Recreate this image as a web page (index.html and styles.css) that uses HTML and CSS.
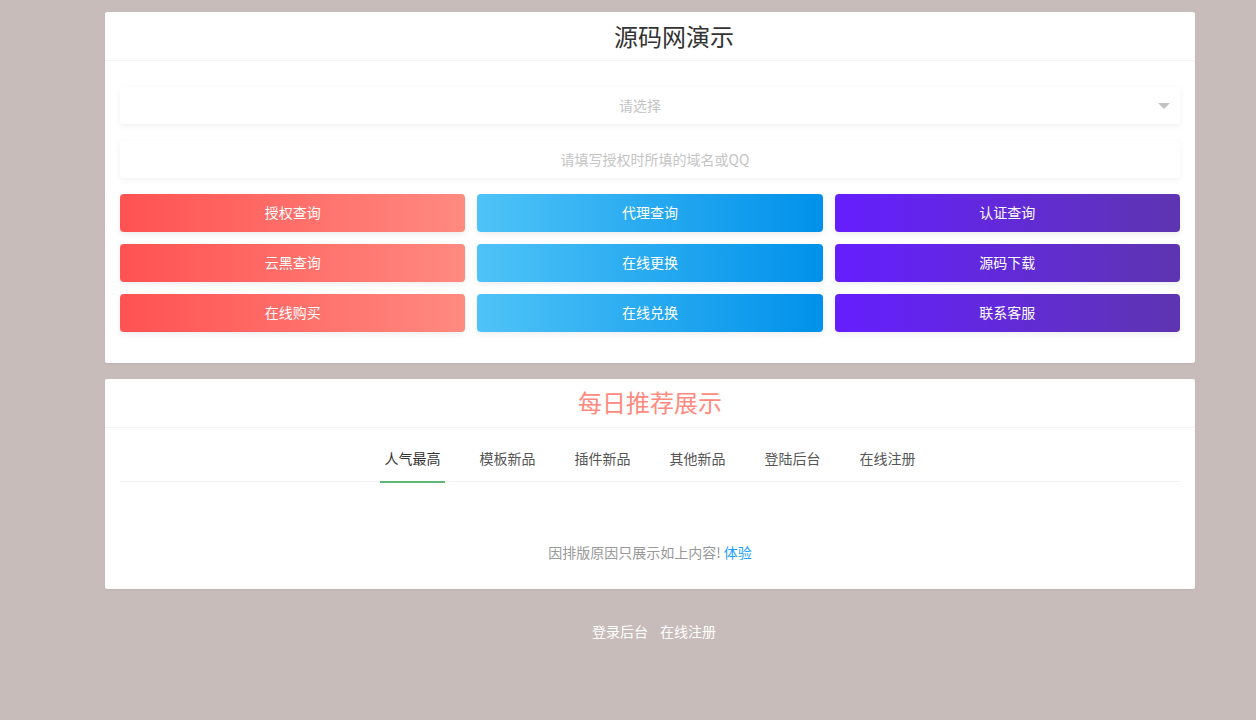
FILE: index.html
```html
<!DOCTYPE html>
<html lang="zh-CN">
<head>
<meta charset="utf-8">
<title>源码网演示</title>
<link rel="stylesheet" href="styles.css">
</head>
<body>
<main class="wrap">
  <section class="card">
    <header class="card-head"><h1 class="title main-title">源码网演示</h1></header>
    <div class="card-body">
      <div class="field select">
        <span class="placeholder">请选择</span>
        <span class="caret"></span>
      </div>
      <div class="field text">
        <span class="placeholder">请填写授权时所填的域名或QQ</span>
      </div>
      <div class="btn-grid">
        <a class="btn red">授权查询</a>
        <a class="btn blue">代理查询</a>
        <a class="btn purple">认证查询</a>
        <a class="btn red">云黑查询</a>
        <a class="btn blue">在线更换</a>
        <a class="btn purple">源码下载</a>
        <a class="btn red">在线购买</a>
        <a class="btn blue">在线兑换</a>
        <a class="btn purple">联系客服</a>
      </div>
    </div>
  </section>

  <section class="card">
    <header class="card-head"><h2 class="title pink">每日推荐展示</h2></header>
    <div class="card-body tabs-body">
      <ul class="tabs">
        <li class="tab active">人气最高</li>
        <li class="tab">模板新品</li>
        <li class="tab">插件新品</li>
        <li class="tab">其他新品</li>
        <li class="tab">登陆后台</li>
        <li class="tab">在线注册</li>
      </ul>
      <p class="note">因排版原因只展示如上内容! <a class="link">体验</a></p>
    </div>
  </section>

  <footer class="foot">
    <a>登录后台</a>
    <a>在线注册</a>
  </footer>
</main>
</body>
</html>
```
FILE: styles.css
```css
* { box-sizing: border-box; }

html, body {
  margin: 0;
  padding: 0;
}

body {
  background: #c7bcb9;
  font-family: "Noto Sans CJK SC", "Noto Sans", "Liberation Sans", sans-serif;
  font-size: 14px;
  color: #333;
}

.wrap {
  width: 1090px;
  margin: 0 0 0 105px;
  padding: 12px 0 0;
  display: flex;
  flex-direction: column;
  gap: 16px;
}

.card {
  background: #fff;
  border-radius: 2px;
  box-shadow: 0 1px 2px rgba(0, 0, 0, 0.05);
}

.card-head {
  height: 49px;
  border-bottom: 1px solid #f2f2f2;
  display: flex;
  align-items: center;
  justify-content: center;
}

.title {
  margin: 0;
  font-size: 24px;
  font-weight: normal;
  line-height: 1;
  color: #333;
  position: relative;
  top: -1px;
}

.main-title {
  padding-left: 48px;
  top: 0;
}

.title.pink { color: #ff8a80; }

.card-body {
  padding: 26px 15px 31px;
  display: flex;
  flex-direction: column;
  gap: 17px;
}

.field {
  height: 37px;
  padding-bottom: 2px;
  background: #fff;
  border-radius: 3px;
  box-shadow: 0 2px 6px rgba(0, 0, 0, 0.06);
  display: flex;
  align-items: center;
  justify-content: center;
  position: relative;
}

.field.select { padding-right: 20px; }
.field.text { padding-left: 10px; }

.placeholder {
  color: #c4c4c4;
  font-size: 14px;
}

.caret {
  position: absolute;
  right: 10px;
  top: 16px;
  width: 0;
  height: 0;
  border-left: 6px solid transparent;
  border-right: 6px solid transparent;
  border-top: 6px solid #c2c2c2;
}

.btn-grid {
  display: grid;
  grid-template-columns: repeat(3, 1fr);
  gap: 12px;
  margin-top: -1px;
}

.btn {
  height: 38px;
  padding-bottom: 2px;
  border-radius: 4px;
  color: #fff;
  display: flex;
  align-items: center;
  justify-content: center;
  font-size: 14px;
  box-shadow: 0 2px 6px rgba(0, 0, 0, 0.08);
}

.btn.red { background: linear-gradient(90deg, #ff5252, #ff8a80); }
.btn.blue { background: linear-gradient(90deg, #4fc3f7, #0091ea); }
.btn.purple { background: linear-gradient(90deg, #651fff, #5e35b1); }

.tabs-body {
  padding: 14px 15px 27px;
  gap: 0;
}

.tabs {
  list-style: none;
  margin: 0;
  padding: 0;
  height: 40px;
  border-bottom: 1px solid #f2f2f2;
  display: flex;
  justify-content: center;
  gap: 30px;
}

.tab {
  width: 65px;
  height: 40px;
  line-height: 32px;
  text-align: center;
  color: #555;
  font-size: 14px;
  position: relative;
}

.tab.active { color: #333; }

.tab.active::after {
  content: "";
  position: absolute;
  left: 0;
  right: 0;
  bottom: -1px;
  height: 2px;
  background: #5fb878;
}

.note {
  margin: 60px 0 0;
  text-align: center;
  color: #999;
  font-size: 14px;
  line-height: 20px;
}

.link { color: #1e9fff; }

.foot {
  display: flex;
  justify-content: center;
  gap: 12px;
  padding: 16px 0 0;
  position: relative;
  left: 4px;
}

.foot a {
  color: #fff;
  font-size: 14px;
}
```
